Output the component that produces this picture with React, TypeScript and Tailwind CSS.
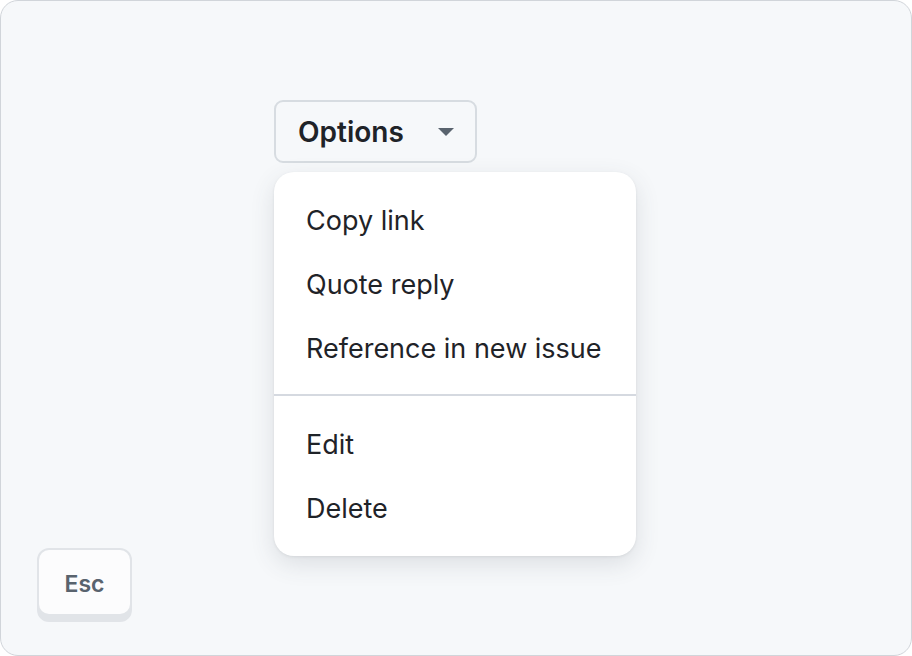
const items = ['Copy link', 'Quote reply', 'Reference in new issue'];
const danger = ['Edit', 'Delete'];

function MenuItem({ label }: { label: string }) {
  return (
    <div className="flex h-16 items-center px-8 pt-[2px] text-[27px] text-[#1f2328]">
      {label}
    </div>
  );
}

export default function App() {
  return (
    <div
      className="h-[656px] w-[912px] bg-white"
      style={{ fontFamily: 'Inter, "Noto Sans", sans-serif' }}
    >
      <div className="flex h-full flex-col rounded-[18px] border border-[#d1d5da] bg-[#f6f8fa]">
        {/* Trigger + menu */}
        <div className="relative ml-[273px] mt-[99px] self-start">
          <button className="flex h-[63px] w-[203px] items-center rounded-[9px] border-2 border-[#d7dce1] bg-[#f6f8fa] pl-[22px] pr-[21px]">
            <span className="text-[28px] font-semibold leading-none text-[#1f2328]">Options</span>
            <svg className="ml-auto" width="16" height="8" viewBox="0 0 16 8">
              <path d="M0 0h16L8 8z" fill="#59636e" />
            </svg>
          </button>

          <div className="absolute left-0 top-[72px] w-[362px] rounded-[20px] bg-white py-4 shadow-[0_8px_24px_rgba(66,74,83,0.14),0_1px_3px_rgba(31,35,40,0.08)]">
            {items.map(label => (
              <MenuItem key={label} label={label} />
            ))}
            <div className="mb-4 mt-[14px] h-[2px] bg-[#d5d9e0]" />
            {danger.map(label => (
              <MenuItem key={label} label={label} />
            ))}
          </div>
        </div>

        {/* Esc key */}
        <div className="mb-[33px] ml-[36px] mt-auto">
          <div className="flex h-[74px] w-[95px] items-start rounded-[12px] border-2 border-[#e1e4e8] bg-[#e1e4e8]">
            <div className="flex h-[64px] w-full items-center justify-center rounded-[10px] bg-[#fcfcfd] pt-[5px]">
              <span className="text-[23px] font-semibold text-[#59636e]">Esc</span>
            </div>
          </div>
        </div>
      </div>
    </div>
  );
}
